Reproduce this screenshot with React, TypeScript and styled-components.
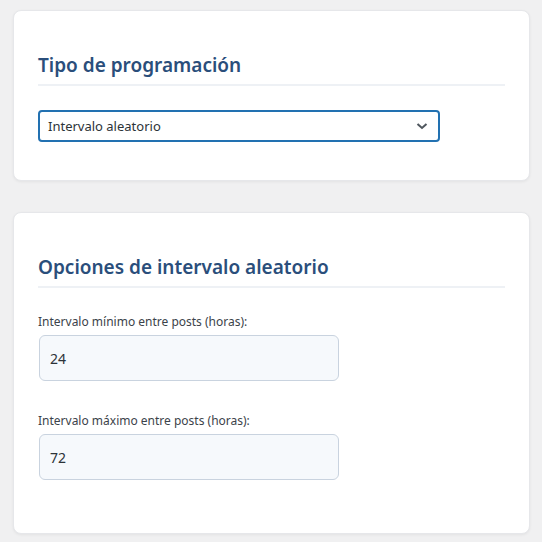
import styled, { createGlobalStyle } from "styled-components";

const GlobalStyle = createGlobalStyle`
  html, body {
    margin: 0;
    padding: 0;
    background: #f0f0f1;
    font-family: "Noto Sans", "Open Sans", sans-serif;
    color: #3c434a;
  }
`;

const Page = styled.div`
  display: flex;
  flex-direction: column;
  gap: 31px;
  padding: 10px 12px 9px 13px;
`;

const Card = styled.section`
  display: flex;
  flex-direction: column;
  background: #fff;
  border: 1px solid #e6e7ea;
  border-radius: 8px;
  box-shadow: 0 1px 3px rgba(0, 0, 0, 0.06);
  padding: 24px 24px 38px;
`;

const Title = styled.h2`
  margin: 17px 0 0;
  padding-bottom: 6px;
  border-bottom: 2px solid #eef1f5;
  font-size: 19px;
  font-weight: 600;
  line-height: 26px;
  color: #2a4e7b;
`;

const SelectBox = styled.div`
  margin-top: 24px;
  width: 402px;
  height: 32px;
  box-sizing: border-box;
  border: 2px solid #2271b1;
  border-radius: 4px;
  display: flex;
  align-items: center;
  justify-content: space-between;
  padding: 0 10px 0 8px;
  font-size: 13px;
  color: #2c3338;
`;

const Chevron = styled.svg`
  width: 12px;
  height: 12px;
  color: #50575e;
`;

const Field = styled.div<{ $first?: boolean }>`
  display: flex;
  flex-direction: column;
  margin: ${(p) => (p.$first ? "25px" : "16px")} 0 15px;
`;

const Label = styled.label`
  font-size: 12px;
  line-height: 18px;
  color: #3c434a;
  margin-bottom: 4px;
`;

const Input = styled.div`
  width: 300px;
  height: 46px;
  box-sizing: border-box;
  margin-left: 1px;
  background: #f6f9fc;
  border: 1px solid #c9d3df;
  border-radius: 6px;
  display: flex;
  align-items: center;
  padding: 0 10px;
  font-size: 14px;
  color: #2c3338;
`;

export default function App() {
  return (
    <>
      <GlobalStyle />
      <Page>
        <Card>
          <Title>Tipo de programación</Title>
          <SelectBox>
            <span>Intervalo aleatorio</span>
            <Chevron viewBox="0 0 12 12" fill="none">
              <path d="M1.5 4 L6 8 L10.5 4" stroke="currentColor" strokeWidth="2" />
            </Chevron>
          </SelectBox>
        </Card>
        <Card>
          <Title>Opciones de intervalo aleatorio</Title>
          <Field $first>
            <Label>Intervalo mínimo entre posts (horas):</Label>
            <Input>24</Input>
          </Field>
          <Field>
            <Label>Intervalo máximo entre posts (horas):</Label>
            <Input>72</Input>
          </Field>
        </Card>
      </Page>
    </>
  );
}
